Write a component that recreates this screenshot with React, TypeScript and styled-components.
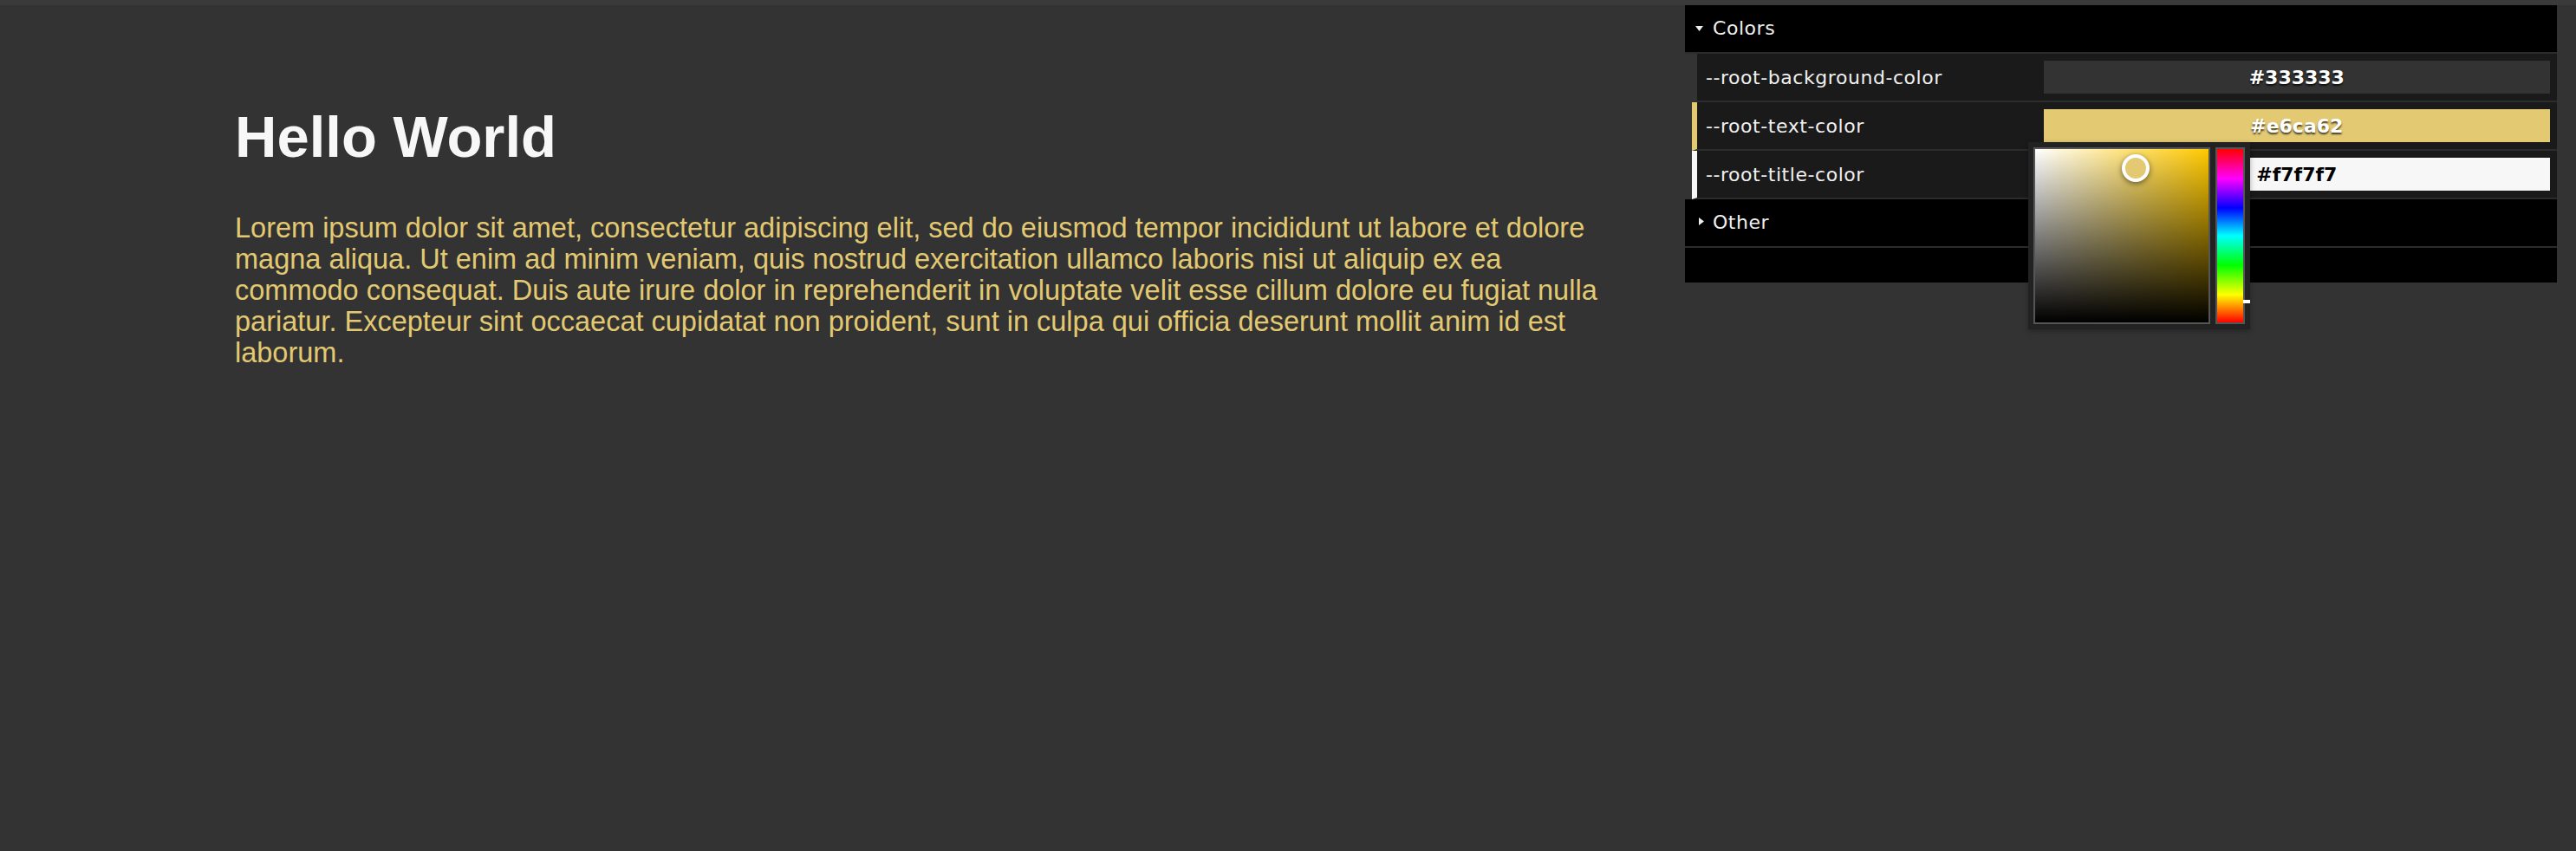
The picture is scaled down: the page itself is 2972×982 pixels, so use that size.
import React from "react";
import styled, { createGlobalStyle } from "styled-components";

const GlobalStyle = createGlobalStyle`
  html, body { margin: 0; padding: 0; background: #333333; }
  body { width: 2972px; height: 982px; overflow: hidden; }
`;

const Page = styled.div`
  position: relative;
  width: 2972px;
  height: 982px;
  background: #333333;
  display: flex;
  flex-direction: column;
`;

const TopStrip = styled.div`
  flex: none;
  height: 6px;
  background: #3a3a3a;
`;

const Main = styled.main`
  padding-left: 271px;
  font-family: "Liberation Sans", Arial, Helvetica, sans-serif;
`;

const Heading = styled.h1`
  margin: 118px 0 0;
  font-size: 67px;
  line-height: 68px;
  font-weight: 700;
  color: #f7f7f7;
`;

const Body = styled.p`
  margin: 53px 0 0;
  width: 1580px;
  font-size: 32.5px;
  line-height: 36px;
  color: #e2c972;
`;

const Panel = styled.aside`
  position: absolute;
  top: 6px;
  right: 22px;
  width: 1006px;
  font-family: "DejaVu Sans", "Lucida Grande", sans-serif;
  font-size: 22px;
  letter-spacing: 0.55px;
  color: #f0f0f0;
`;

const FolderTitle = styled.div`
  position: relative;
  height: 54px;
  line-height: 54px;
  padding-left: 32px;
  background: #000;
  border-bottom: 2px solid #2c2c2c;
`;

const Caret = styled.svg<{ $open: boolean }>`
  position: absolute;
  left: ${(p) => (p.$open ? "12px" : "16px")};
  top: ${(p) => (p.$open ? "24px" : "21px")};
`;

const Rows = styled.ul`
  list-style: none;
  margin: 0;
  padding: 0 0 0 8px;
`;

const Row = styled.li<{ $accent: string }>`
  display: flex;
  height: 54px;
  padding: 0 8px 0 10px;
  background: #1a1a1a;
  border-left: 6px solid ${(p) => p.$accent};
  border-bottom: 2px solid #2c2c2c;
`;

const Label = styled.span`
  flex: none;
  width: 40%;
  align-self: center;
  white-space: nowrap;
  overflow: hidden;
`;

const Control = styled.div`
  position: relative;
  flex: none;
  width: 60%;
  display: flex;
  align-items: center;
`;

const Swatch = styled.input<{ $bg: string; $light: boolean }>`
  box-sizing: border-box;
  width: 100%;
  height: 38px;
  margin: 0;
  padding: 0;
  border: 0;
  outline: none;
  background: ${(p) => p.$bg};
  color: ${(p) => (p.$light ? "#000" : "#fff")};
  text-shadow: ${(p) =>
    p.$light ? "rgba(255,255,255,0.7) 0 2px 2px" : "rgba(0,0,0,0.7) 0 2px 2px"};
  text-align: center;
  font-family: "DejaVu Sans", "Lucida Grande", sans-serif;
  font-weight: 700;
  font-size: 22px;
`;

const CloseBar = styled.div`
  height: 40px;
  background: #000;
`;

const Selector = styled.div`
  position: absolute;
  left: -18px;
  top: 46px;
  z-index: 10;
  display: flex;
  gap: 6px;
  padding: 6px;
  background: #222;
  box-shadow: 0 2px 6px rgba(0, 0, 0, 0.3);
`;

const SatField = styled.div<{ $hue: string }>`
  position: relative;
  width: 200px;
  height: 200px;
  border: 2px solid #555;
  background: linear-gradient(to right, #fff 0%, ${(p) => p.$hue} 100%);
`;

const ValueShade = styled.div`
  position: absolute;
  inset: 0;
  background: linear-gradient(to bottom, rgba(0, 0, 0, 0) 0%, #000 100%);
`;

const FieldKnob = styled.div<{ $color: string }>`
  position: absolute;
  width: 24px;
  height: 24px;
  border: 4px solid #fff;
  border-radius: 50%;
  background: ${(p) => p.$color};
  box-shadow: 0 2px 6px rgba(0, 0, 0, 0.5);
  z-index: 1;
`;

const HueField = styled.div`
  position: relative;
  width: 30px;
  height: 200px;
  border: 2px solid #555;
  background: linear-gradient(
    to bottom,
    #ff0000 0%,
    #ff00ff 17%,
    #0000ff 34%,
    #00ffff 50%,
    #00ff00 67%,
    #ffff00 84%,
    #ff0000 100%
  );
`;

const HueKnob = styled.div`
  position: absolute;
  left: 0;
  width: 30px;
  height: 4px;
  border-right: 8px solid #fff;
  z-index: 1;
`;

function hexToHsv(hex: string) {
  const n = parseInt(hex.slice(1), 16);
  const r = ((n >> 16) & 255) / 255;
  const g = ((n >> 8) & 255) / 255;
  const b = (n & 255) / 255;
  const max = Math.max(r, g, b);
  const min = Math.min(r, g, b);
  const d = max - min;
  let h = 0;
  if (d > 0) {
    if (max === r) h = 60 * (((g - b) / d) % 6);
    else if (max === g) h = 60 * ((b - r) / d + 2);
    else h = 60 * ((r - g) / d + 4);
  }
  if (h < 0) h += 360;
  return { h, s: max === 0 ? 0 : d / max, v: max };
}

function hueHex(h: number) {
  const x = 1 - Math.abs(((h / 60) % 2) - 1);
  const seg = Math.floor(h / 60) % 6;
  const rgb = [
    [1, x, 0],
    [x, 1, 0],
    [0, 1, x],
    [0, x, 1],
    [x, 0, 1],
    [1, 0, x],
  ][seg];
  return (
    "#" +
    rgb
      .map((c) => Math.round(c * 255).toString(16).padStart(2, "0"))
      .join("")
  );
}

type ColorVar = { name: string; value: string; shown: string };

const colors: ColorVar[] = [
  { name: "--root-background-color", value: "#333333", shown: "#333333" },
  { name: "--root-text-color", value: "#e6ca62", shown: "#e2c972" },
  { name: "--root-title-color", value: "#f7f7f7", shown: "#f7f7f7" },
];

function Picker({ color }: { color: ColorVar }) {
  const { h, s, v } = hexToHsv(color.value);
  const size = 200;
  return (
    <Selector>
      <SatField $hue={hueHex(h)}>
        <ValueShade />
        <FieldKnob
          $color={color.shown}
          style={{ left: s * size - 14, top: (1 - v) * size - 14 }}
        />
      </SatField>
      <HueField>
        <HueKnob style={{ top: (1 - h / 360) * size }} />
      </HueField>
    </Selector>
  );
}

function ColorRow({ color, open }: { color: ColorVar; open: boolean }) {
  const { s, v } = hexToHsv(color.value);
  const light = !(v < 0.5 || s > 0.5);
  return (
    <Row $accent={color.shown}>
      <Label>{color.name}</Label>
      <Control>
        <Swatch readOnly value={color.value} $bg={color.shown} $light={light} />
        {open && <Picker color={color} />}
      </Control>
    </Row>
  );
}

function Folder({
  title,
  open,
  children,
}: {
  title: string;
  open: boolean;
  children?: React.ReactNode;
}) {
  return (
    <div>
      <FolderTitle>
        {open ? (
          <Caret $open width="9" height="6" viewBox="0 0 9 6">
            <polygon points="0,0 9,0 4.5,6" fill="#eee" />
          </Caret>
        ) : (
          <Caret $open={false} width="6" height="9" viewBox="0 0 6 9">
            <polygon points="0,0 6,4.5 0,9" fill="#eee" />
          </Caret>
        )}
        {title}
      </FolderTitle>
      {open && <Rows>{children}</Rows>}
    </div>
  );
}

export default function App() {
  return (
    <>
      <GlobalStyle />
      <Page>
        <TopStrip />
        <Main>
          <Heading>Hello World</Heading>
          <Body>
            Lorem ipsum dolor sit amet, consectetur adipiscing elit, sed do
            eiusmod tempor incididunt ut labore et dolore magna aliqua. Ut enim
            ad minim veniam, quis nostrud exercitation ullamco laboris nisi ut
            aliquip ex ea commodo consequat. Duis aute irure dolor in
            reprehenderit in voluptate velit esse cillum dolore eu fugiat nulla
            pariatur. Excepteur sint occaecat cupidatat non proident, sunt in
            culpa qui officia deserunt mollit anim id est laborum.
          </Body>
        </Main>
        <Panel>
          <Folder title="Colors" open>
            {colors.map((c, i) => (
              <ColorRow key={c.name} color={c} open={i === 1} />
            ))}
          </Folder>
          <Folder title="Other" open={false} />
          <CloseBar />
        </Panel>
      </Page>
    </>
  );
}
